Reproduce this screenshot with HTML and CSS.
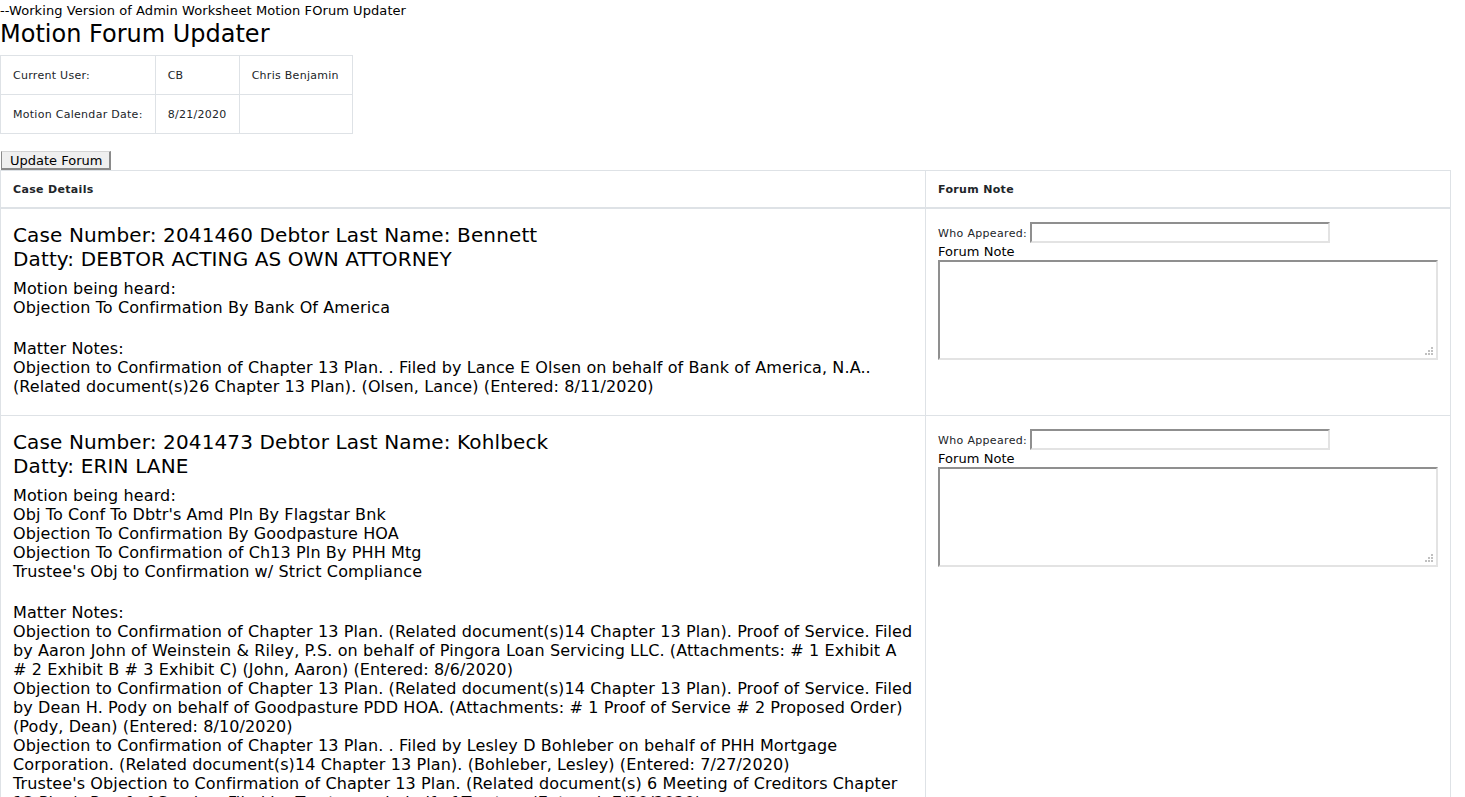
FILE: index.html
```html
<!DOCTYPE html>
<html>
<head>
<meta charset="utf-8">
<title>Motion Forum Updater</title>
<link rel="stylesheet" href="styles.css">
</head>
<body>
<div class="top-note">--Working Version of Admin Worksheet Motion FOrum Updater</div>
<h1 class="title">Motion Forum Updater</h1>
<table class="info">
  <tr><td class="c1">Current User:</td><td class="c2">CB</td><td class="c3">Chris Benjamin</td></tr>
  <tr><td class="c1">Motion Calendar Date:</td><td class="c2">8/21/2020</td><td class="c3"></td></tr>
</table>
<button class="update-btn" type="button">Update Forum</button>
<table class="main">
  <thead>
    <tr><th class="col-case">Case Details</th><th class="col-note">Forum Note</th></tr>
  </thead>
  <tbody>
    <tr>
      <td class="case">
        <div class="case-head">Case Number: 2041460 Debtor Last Name: Bennett<br>Datty: DEBTOR ACTING AS OWN ATTORNEY</div>
        <div class="case-body">Motion being heard:<br>Objection To Confirmation By Bank Of America</div>
        <div class="case-notes">Matter Notes:<br>Objection to Confirmation of Chapter 13 Plan. . Filed by Lance E Olsen on behalf of Bank of America, N.A.. (Related document(s)26 Chapter 13 Plan). (Olsen, Lance) (Entered: 8/11/2020)</div>
      </td>
      <td class="note">
        <div class="who"><label>Who Appeared:</label><input type="text" class="who-input"></div>
        <div class="fn-label">Forum Note</div>
        <div class="fn-wrap">
          <textarea class="fn-text"></textarea>
          <svg class="grip" width="9" height="9" viewBox="0 0 9 9"><rect x="6" y="0" width="2" height="2"/><rect x="3" y="3" width="2" height="2"/><rect x="6" y="3" width="2" height="2"/><rect x="0" y="6" width="2" height="2"/><rect x="3" y="6" width="2" height="2"/><rect x="6" y="6" width="2" height="2"/></svg>
        </div>
      </td>
    </tr>
    <tr>
      <td class="case">
        <div class="case-head">Case Number: 2041473 Debtor Last Name: Kohlbeck<br>Datty: ERIN LANE</div>
        <div class="case-body">Motion being heard:<br>Obj To Conf To Dbtr's Amd Pln By Flagstar Bnk<br>Objection To Confirmation By Goodpasture HOA<br>Objection To Confirmation of Ch13 Pln By PHH Mtg<br>Trustee's Obj to Confirmation w/ Strict Compliance</div>
        <div class="case-notes">Matter Notes:<br>Objection to Confirmation of Chapter 13 Plan. (Related document(s)14 Chapter 13 Plan). Proof of Service. Filed by Aaron John of Weinstein &amp; Riley, P.S. on behalf of Pingora Loan Servicing LLC. (Attachments: # 1 Exhibit A # 2 Exhibit B # 3 Exhibit C) (John, Aaron) (Entered: 8/6/2020)<br>Objection to Confirmation of Chapter 13 Plan. (Related document(s)14 Chapter 13 Plan). Proof of Service. Filed by Dean H. Pody on behalf of Goodpasture PDD HOA. (Attachments: # 1 Proof of Service # 2 Proposed Order) (Pody, Dean) (Entered: 8/10/2020)<br>Objection to Confirmation of Chapter 13 Plan. . Filed by Lesley D Bohleber on behalf of PHH Mortgage Corporation. (Related document(s)14 Chapter 13 Plan). (Bohleber, Lesley) (Entered: 7/27/2020)<br>Trustee's Objection to Confirmation of Chapter 13 Plan. (Related document(s) 6 Meeting of Creditors Chapter 13 Plan). Proof of Service. Filed by Trustee on behalf of Trustee. (Entered: 7/30/2020)</div>
      </td>
      <td class="note">
        <div class="who"><label>Who Appeared:</label><input type="text" class="who-input"></div>
        <div class="fn-label">Forum Note</div>
        <div class="fn-wrap">
          <textarea class="fn-text"></textarea>
          <svg class="grip" width="9" height="9" viewBox="0 0 9 9"><rect x="6" y="0" width="2" height="2"/><rect x="3" y="3" width="2" height="2"/><rect x="6" y="3" width="2" height="2"/><rect x="0" y="6" width="2" height="2"/><rect x="3" y="6" width="2" height="2"/><rect x="6" y="6" width="2" height="2"/></svg>
        </div>
      </td>
    </tr>
  </tbody>
</table>
</body>
</html>
```
FILE: styles.css
```css
html, body {
  margin: 0;
  padding: 0;
  background: #fff;
}
body {
  font-family: "DejaVu Sans", Verdana, sans-serif;
  color: #000;
}
.top-note {
  font-size: 13px;
  line-height: 19px;
  margin-top: 1px;
  letter-spacing: 0.07px;
}
.title {
  font-size: 24px;
  font-weight: normal;
  line-height: 28px;
  margin: 0 0 7px 0;
}
.info {
  border-collapse: collapse;
  font-size: 11px;
  letter-spacing: 0.28px;
  color: #212529;
}
.info td {
  border: 1px solid #dee2e6;
  padding: 0 12px;
  height: 38px;
  vertical-align: middle;
  white-space: nowrap;
}
.info .c1 { width: 129px; }
.info .c2 { width: 59px; }
.info .c3 { width: 88px; }
.update-btn {
  display: block;
  margin: 17px 0 0 1px;
  font-family: "DejaVu Sans", Verdana, sans-serif;
  font-size: 13px;
  line-height: 15px;
  padding: 1px 7px 1px 8px;
  height: 19px;
  background: #efefef;
  border-style: solid;
  border-width: 1px 2px 2px 1px;
  border-color: #d4d4d4 #8a8a8a #8a8a8a #8a8a8a;
  color: #000;
  border-radius: 0;
}
.main {
  border-collapse: collapse;
  width: 1451px;
  color: #000;
}
.main th {
  font-size: 11px;
  letter-spacing: 0.33px;
  font-weight: bold;
  color: #212529;
  text-align: left;
  border: 1px solid #dee2e6;
  border-bottom-width: 2px;
  padding: 0 12px;
  height: 36px;
}
.main .col-case { width: 900px; }
.main td {
  border: 1px solid #dee2e6;
  vertical-align: top;
  padding: 12px;
}
.main td.note {
  padding-top: 13px;
}
.case-head {
  font-size: 20px;
  line-height: 24px;
  letter-spacing: 0.13px;
  padding-top: 2px;
}
.case-body,
.case-notes {
  font-size: 16px;
  line-height: 19px;
  letter-spacing: 0.11px;
}
.case-body {
  margin-top: 8px;
}
.case-notes {
  margin-top: 22px;
  padding-bottom: 7px;
}
.note {
  font-size: 11px;
}
.who {
  display: flex;
  align-items: center;
  height: 21px;
}
.who label {
  color: #212529;
  letter-spacing: 0.33px;
  margin-right: 3px;
  padding-top: 2px;
}
.who-input {
  width: 300px;
  height: 21px;
  box-sizing: border-box;
  border-style: solid;
  border-width: 2px;
  border-color: #8f8f8f #e3e3e3 #e3e3e3 #8f8f8f;
  margin: 0;
  padding: 1px 2px;
  background: #fff;
}
.fn-label {
  font-size: 13px;
  line-height: 17px;
  letter-spacing: 0.05px;
}
.fn-wrap {
  position: relative;
  width: 500px;
  height: 100px;
}
.fn-text {
  display: block;
  width: 500px;
  height: 100px;
  box-sizing: border-box;
  margin: 0;
  border-style: solid;
  border-width: 2px;
  border-color: #8f8f8f #e3e3e3 #e3e3e3 #8f8f8f;
  resize: none;
  outline: none;
  background: #fff;
  font-family: "DejaVu Sans", Verdana, sans-serif;
}
.grip {
  position: absolute;
  right: 4px;
  bottom: 4px;
  fill: #c0c0c0;
}
```
